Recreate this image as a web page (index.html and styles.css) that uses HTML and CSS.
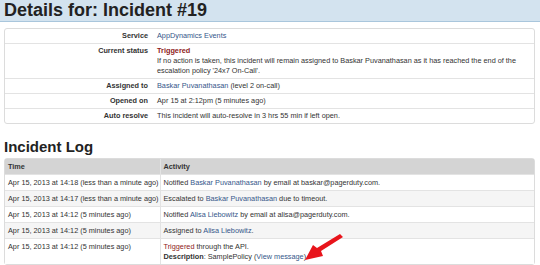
FILE: index.html
```html
<!DOCTYPE html>
<html lang="en">

<head>
    <meta charset="UTF-8">
    <title>Details for: Incident #19</title>
    <link rel="stylesheet" href="styles.css">
</head>

<body>
    <div class="cabecera">
        <h1>Details for: Incident #19</h1>
    </div>

    <div class="contenido">
        <table class="detalles">
            <tr>
                <th>Service</th>
                <td><a href="#">AppDynamics Events</a></td>
            </tr>
            <tr>
                <th>Current status</th>
                <td>
                    <span class="disparado fuerte">Triggered</span><br>
                    If no action is taken, this incident will remain assigned to Baskar Puvanathasan as it has reached the end of the escalation policy '24x7 On-Call'.
                </td>
            </tr>
            <tr>
                <th>Assigned to</th>
                <td><a href="#">Baskar Puvanathasan</a> (level 2 on-call)</td>
            </tr>
            <tr>
                <th>Opened on</th>
                <td>Apr 15 at 2:12pm (5 minutes ago)</td>
            </tr>
            <tr>
                <th>Auto resolve</th>
                <td>This incident will auto-resolve in 3 hrs 55 min if left open.</td>
            </tr>
        </table>

        <h2>Incident Log</h2>

        <table class="registro">
            <tr>
                <th class="colTiempo">Time</th>
                <th>Activity</th>
            </tr>
            <tr>
                <td>Apr 15, 2013 at 14:18 (less than a minute ago)</td>
                <td>Notified <a href="#">Baskar Puvanathasan</a> by email at baskar@pagerduty.com.</td>
            </tr>
            <tr>
                <td>Apr 15, 2013 at 14:17 (less than a minute ago)</td>
                <td>Escalated to <a href="#">Baskar Puvanathasan</a> due to timeout.</td>
            </tr>
            <tr>
                <td>Apr 15, 2013 at 14:12 (5 minutes ago)</td>
                <td>Notified <a href="#">Alisa Liebowitz</a> by email at alisa@pagerduty.com.</td>
            </tr>
            <tr>
                <td>Apr 15, 2013 at 14:12 (5 minutes ago)</td>
                <td>Assigned to <a href="#">Alisa Liebowitz</a>.</td>
            </tr>
            <tr>
                <td>Apr 15, 2013 at 14:12 (5 minutes ago)</td>
                <td>
                    <span class="disparado">Triggered</span> through the API.<br>
                    <b>Description</b>: SamplePolicy (<a href="#" class="verMensaje">View message</a>)<svg class="flecha" width="40" height="27" viewBox="0 0 40 27"><path d="M36 0 L39 3 L17 17 L19 22 L1 26 L9 11 L13 14 Z" fill="#e8141b"/></svg>
                </td>
            </tr>
        </table>
    </div>
</body>

</html>
```

FILE: styles.css
```css
body {
    margin: 0;
    font-family: "Liberation Sans", Arial, sans-serif;
    font-size: 7.3px;
    color: #333;
    background-color: #fff;
}

a {
    color: #35578a;
    text-decoration: none;
}

.cabecera {
    background-color: #d3e3ef;
    border-bottom: solid 1px #a9c6dc;
    height: 21px;
    padding-left: 4px;
}

h1 {
    margin: 0;
    font-size: 18px;
    line-height: 21px;
    color: #222;
}

.contenido {
    padding: 6px 5px 0 4px;
}

table {
    width: 100%;
    border-collapse: separate;
    border-spacing: 0;
    border: solid 1px #dcdcdc;
    border-radius: 3px;
}

td,
th {
    text-align: left;
    vertical-align: top;
    line-height: 10px;
    padding: 2px 4px 2px 3px;
    border-top: solid 1px #e3e3e3;
    white-space: nowrap;
}

tr:first-child td,
tr:first-child th {
    border-top: none;
}

.detalles th {
    width: 140px;
    text-align: right;
    padding-right: 9px;
}

.detalles td {
    padding-left: 0;
    white-space: normal;
}

.disparado {
    color: #8e1a1a;
}

.fuerte {
    font-weight: bold;
}

h2 {
    margin: 14px 0 3px 0;
    font-size: 15px;
    line-height: 17px;
    color: #222;
}

.registro th {
    background-color: #d4d4d4;
    padding-top: 3px;
    padding-bottom: 2px;
}

.registro td {
    padding-top: 3px;
    padding-bottom: 2px;
}

.registro tr:nth-child(odd) td {
    background-color: #f5f5f5;
}

.registro tr:last-child td {
    background-color: #fff;
    position: relative;
}

.colTiempo,
.registro td:first-child {
    width: 143px;
    padding-right: 1px;
    border-right: solid 1px #e3e3e3;
}

.flecha {
    position: absolute;
    margin-left: -2px;
    margin-top: -18px;
}
```
